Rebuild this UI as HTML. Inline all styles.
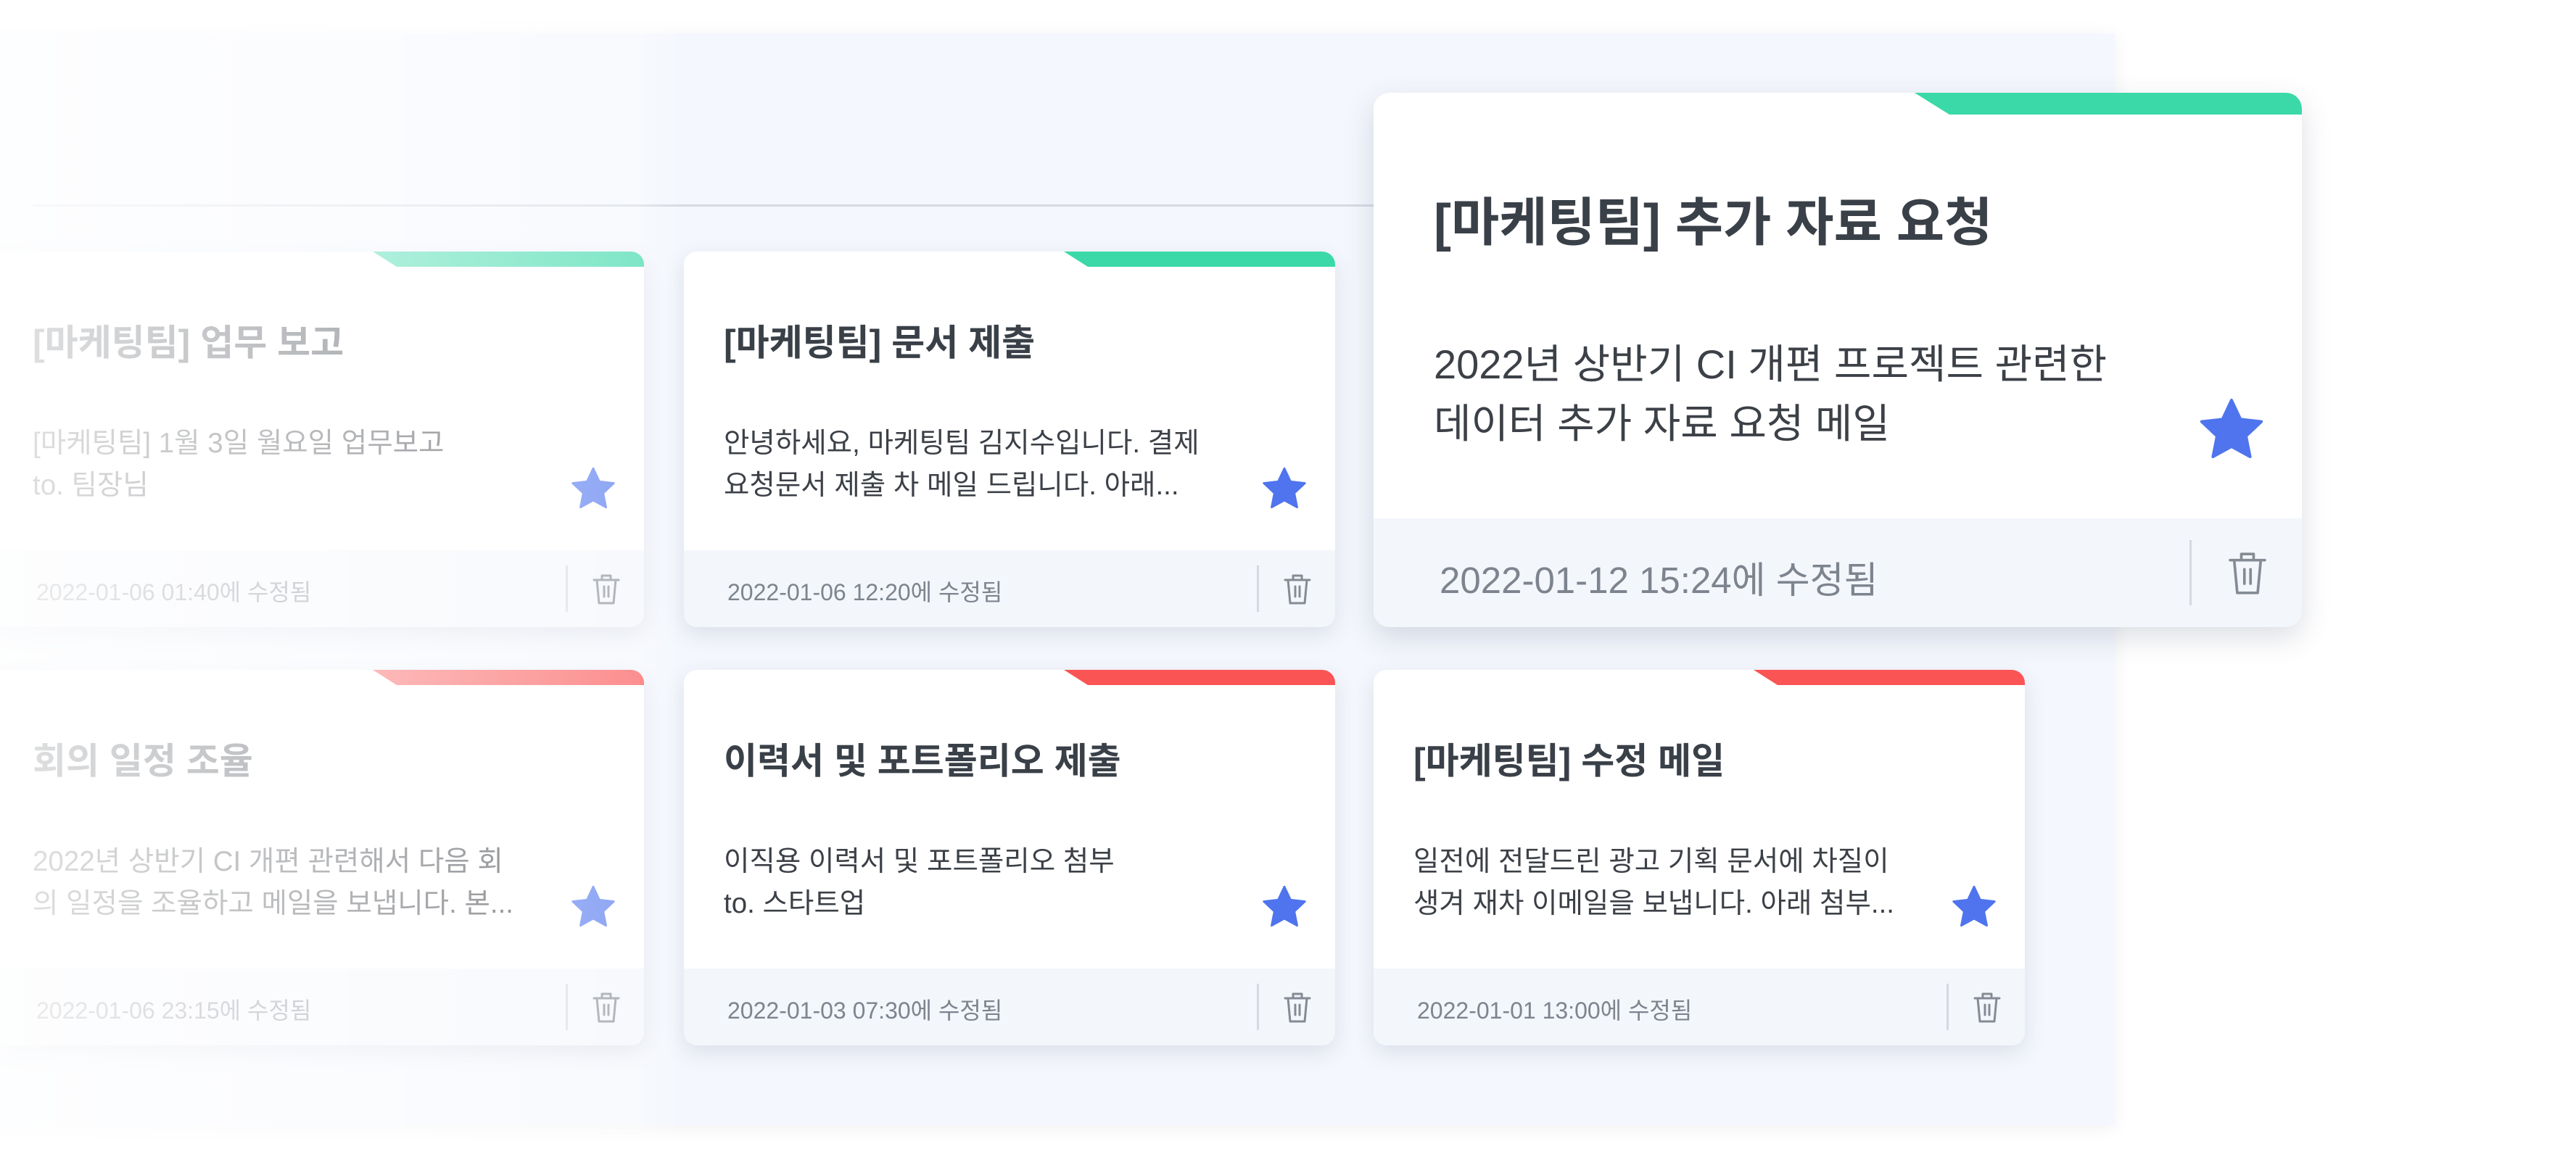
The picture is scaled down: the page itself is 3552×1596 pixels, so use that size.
<!DOCTYPE html>
<html><head><meta charset="utf-8"><style>
*{margin:0;padding:0;box-sizing:border-box}
body{width:3552px;height:1596px;background:#fff;position:relative;overflow:hidden;font-family:"Liberation Sans","Noto Sans CJK KR",sans-serif}
.panel{position:absolute;left:-20px;top:46px;width:2936px;height:1506px;background:#f4f7fd;box-shadow:0 4px 24px rgba(0,0,0,.06)}
.line{position:absolute;left:45px;top:282px;width:1860px;height:3px;background:#d6dae2}
.card{position:absolute;width:898px;height:518px;background:#fff;border-radius:18px;overflow:hidden;box-shadow:0 10px 30px rgba(60,70,100,.13)}
.bar{position:absolute;top:0;right:0;height:21px;width:374px;background:#3bd9a8;clip-path:polygon(0 0,100% 0,100% 100%,33px 100%)}
.red{background:#fa5454}
.t{position:absolute;left:55px;top:86px;font-size:50px;font-weight:bold;color:#3a4048;white-space:nowrap}
.b{position:absolute;left:55px;top:236px;font-size:38.5px;line-height:58px;color:#3c4047;white-space:nowrap}
.f{position:absolute;left:0;bottom:0;width:100%;height:106px;background:#f3f6fb}
.d{position:absolute;left:60px;top:33px;font-size:32px;color:#7d848e}
.dv{position:absolute;left:790px;top:21px;width:3px;height:64px;background:#d5d9e0}
.tr{position:absolute;left:827px;top:32px}
.st{position:absolute;left:795px;top:296px}
.big{left:1894px;top:128px;width:1280px;height:737px;box-shadow:0 14px 40px rgba(60,70,100,.18);border-radius:22px}
.big .bar{height:30px;width:534px;clip-path:polygon(0 0,100% 0,100% 100%,48px 100%)}
.big .t{left:83px;top:120px;font-size:72px;font-weight:bold}
.big .b{left:83px;top:334px;font-size:56px;line-height:82px}
.big .f{height:150px}
.big .d{left:91px;top:44px;font-size:51px}
.big .dv{left:1125px;top:30px;height:90px}
.big .tr{left:1177px;top:45px}
.big .st{left:1135px;top:420px}
.fade{position:absolute;left:0;top:0;width:1000px;height:1596px;background:linear-gradient(to right,rgba(255,255,255,.85) 0,rgba(255,255,255,.6) 500px,rgba(255,255,255,.35) 880px,rgba(255,255,255,0) 940px)}
</style></head><body>
<div class="panel"></div>
<div class="line"></div>

<div class="card" style="left:-10px;top:347px"><div class="bar"></div><div class="t">[마케팅팀] 업무 보고</div><div class="b">[마케팅팀] 1월 3일 월요일 업무보고<br>to. 팀장님</div>
<svg class="st" width="66" height="64" viewBox="0 0 24 23"><path d="M12 1l3.1 6.6 7.2.8-5.3 5 1.4 7.1L12 17l-6.4 3.5 1.4-7.1-5.3-5 7.2-.8z" fill="#4f74ee" stroke="#4f74ee" stroke-linejoin="round"/></svg>
<div class="f"><div class="d">2022-01-06 01:40에 수정됨</div><div class="dv"></div><svg class="tr" width="38" height="44" viewBox="0 0 38 44" fill="none" stroke="#858b94" stroke-width="3" stroke-linecap="round" stroke-linejoin="round"><path d="M2 9h34M13 9V3h12v6M6 9l3 32h20l3-32M16 18v14M22 18v14"/></svg></div></div>

<div class="card" style="left:943px;top:347px"><div class="bar"></div><div class="t">[마케팅팀] 문서 제출</div><div class="b">안녕하세요, 마케팅팀 김지수입니다. 결제<br>요청문서 제출 차 메일 드립니다. 아래...</div>
<svg class="st" width="66" height="64" viewBox="0 0 24 23"><path d="M12 1l3.1 6.6 7.2.8-5.3 5 1.4 7.1L12 17l-6.4 3.5 1.4-7.1-5.3-5 7.2-.8z" fill="#4f74ee" stroke="#4f74ee" stroke-linejoin="round"/></svg>
<div class="f"><div class="d">2022-01-06 12:20에 수정됨</div><div class="dv"></div><svg class="tr" width="38" height="44" viewBox="0 0 38 44" fill="none" stroke="#858b94" stroke-width="3" stroke-linecap="round" stroke-linejoin="round"><path d="M2 9h34M13 9V3h12v6M6 9l3 32h20l3-32M16 18v14M22 18v14"/></svg></div></div>

<div class="card" style="left:-10px;top:924px"><div class="bar red"></div><div class="t">회의 일정 조율</div><div class="b">2022년 상반기 CI 개편 관련해서 다음 회<br>의 일정을 조율하고 메일을 보냅니다. 본...</div>
<svg class="st" width="66" height="64" viewBox="0 0 24 23"><path d="M12 1l3.1 6.6 7.2.8-5.3 5 1.4 7.1L12 17l-6.4 3.5 1.4-7.1-5.3-5 7.2-.8z" fill="#4f74ee" stroke="#4f74ee" stroke-linejoin="round"/></svg>
<div class="f"><div class="d">2022-01-06 23:15에 수정됨</div><div class="dv"></div><svg class="tr" width="38" height="44" viewBox="0 0 38 44" fill="none" stroke="#858b94" stroke-width="3" stroke-linecap="round" stroke-linejoin="round"><path d="M2 9h34M13 9V3h12v6M6 9l3 32h20l3-32M16 18v14M22 18v14"/></svg></div></div>

<div class="card" style="left:943px;top:924px"><div class="bar red"></div><div class="t">이력서 및 포트폴리오 제출</div><div class="b">이직용 이력서 및 포트폴리오 첨부<br>to. 스타트업</div>
<svg class="st" width="66" height="64" viewBox="0 0 24 23"><path d="M12 1l3.1 6.6 7.2.8-5.3 5 1.4 7.1L12 17l-6.4 3.5 1.4-7.1-5.3-5 7.2-.8z" fill="#4f74ee" stroke="#4f74ee" stroke-linejoin="round"/></svg>
<div class="f"><div class="d">2022-01-03 07:30에 수정됨</div><div class="dv"></div><svg class="tr" width="38" height="44" viewBox="0 0 38 44" fill="none" stroke="#858b94" stroke-width="3" stroke-linecap="round" stroke-linejoin="round"><path d="M2 9h34M13 9V3h12v6M6 9l3 32h20l3-32M16 18v14M22 18v14"/></svg></div></div>

<div class="card" style="left:1894px;top:924px"><div class="bar red"></div><div class="t">[마케팅팀] 수정 메일</div><div class="b">일전에 전달드린 광고 기획 문서에 차질이<br>생겨 재차 이메일을 보냅니다. 아래 첨부...</div>
<svg class="st" width="66" height="64" viewBox="0 0 24 23"><path d="M12 1l3.1 6.6 7.2.8-5.3 5 1.4 7.1L12 17l-6.4 3.5 1.4-7.1-5.3-5 7.2-.8z" fill="#4f74ee" stroke="#4f74ee" stroke-linejoin="round"/></svg>
<div class="f"><div class="d">2022-01-01 13:00에 수정됨</div><div class="dv"></div><svg class="tr" width="38" height="44" viewBox="0 0 38 44" fill="none" stroke="#858b94" stroke-width="3" stroke-linecap="round" stroke-linejoin="round"><path d="M2 9h34M13 9V3h12v6M6 9l3 32h20l3-32M16 18v14M22 18v14"/></svg></div></div>

<div class="fade"></div>

<div class="card big"><div class="bar"></div><div class="t">[마케팅팀] 추가 자료 요청</div><div class="b">2022년 상반기 CI 개편 프로젝트 관련한<br>데이터 추가 자료 요청 메일</div>
<svg class="st" width="96" height="92" viewBox="0 0 24 23"><path d="M12 1l3.1 6.6 7.2.8-5.3 5 1.4 7.1L12 17l-6.4 3.5 1.4-7.1-5.3-5 7.2-.8z" fill="#4f74ee" stroke="#4f74ee" stroke-linejoin="round"/></svg>
<div class="f"><div class="d">2022-01-12 15:24에 수정됨</div><div class="dv"></div><svg class="tr" width="56" height="62" viewBox="0 0 38 44" fill="none" stroke="#858b94" stroke-width="2.6" stroke-linecap="round" stroke-linejoin="round"><path d="M2 9h34M13 9V3h12v6M6 9l3 32h20l3-32M16 18v14M22 18v14"/></svg></div></div>
</body></html>
